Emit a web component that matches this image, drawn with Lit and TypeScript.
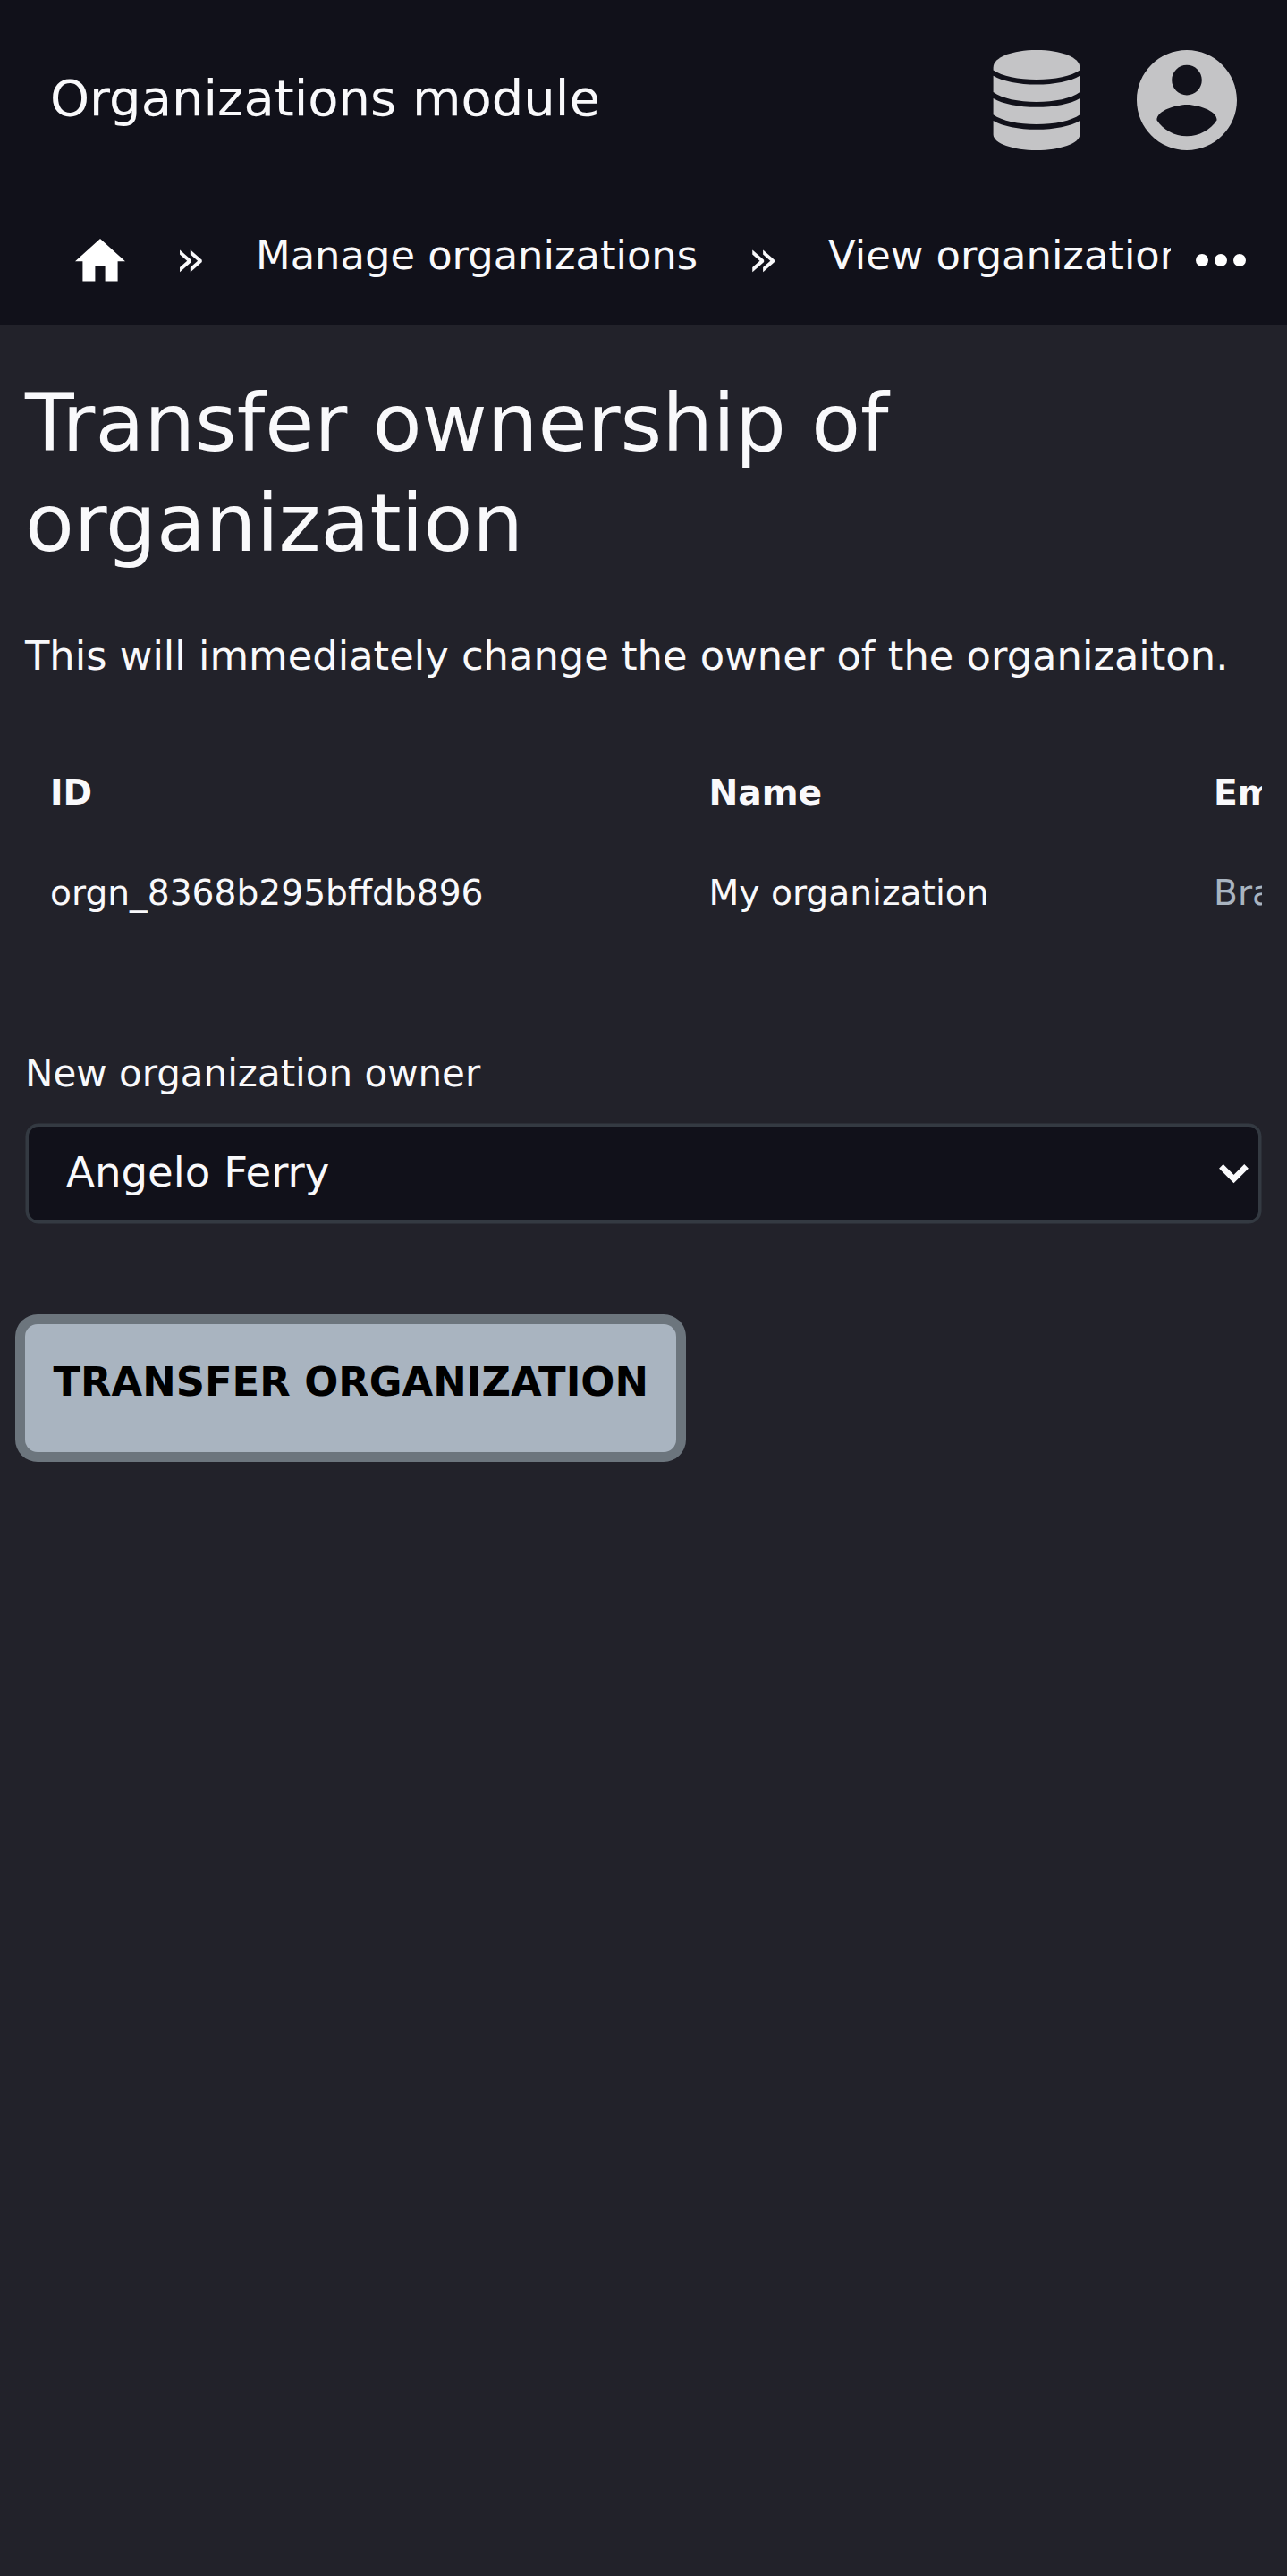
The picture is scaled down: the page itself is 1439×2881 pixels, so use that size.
import { LitElement, html, css } from "lit";
import { customElement } from "lit/decorators.js";

@customElement("app-root")
export class AppRoot extends LitElement {
  static styles = css`
    :host {
      display: block;
      box-sizing: border-box;
      min-height: 2881px;
      background: #22222a;
      color: #f9f9fb;
      font-family: "DejaVu Sans", sans-serif;
      overflow: hidden;
    }
    * {
      box-sizing: border-box;
    }
    svg {
      display: block;
      flex: none;
    }
    .header {
      display: flex;
      align-items: center;
      height: 224px;
      padding: 0 56.5px 0 56px;
      background: #11111a;
      font-size: 56px;
    }
    .title {
      flex: 1;
      line-height: 112px;
      margin-top: -4px;
    }
    .icons {
      display: flex;
      gap: 63px;
      color: #c4c4c6;
    }
    .crumbs {
      display: flex;
      align-items: center;
      height: 140px;
      background: #11111a;
      padding-left: 84px;
    }
    .trail {
      display: flex;
      align-items: center;
      width: 1225px;
      height: 140px;
      overflow: hidden;
      white-space: nowrap;
      font-size: 44.8px;
    }
    .home {
      margin-top: -6px;
    }
    .sep {
      width: 146px;
      margin-top: -11px;
      line-height: 56px;
      text-align: center;
      flex: none;
      font-size: 56px;
    }
    .crumb {
      flex: none;
      margin-top: -17px;
      line-height: 56px;
    }
    .more {
      margin: -7px 0 0 28px;
    }
    .main {
      padding: 53px 28px 0;
    }
    .heading {
      margin: 0;
      font-size: 89.6px;
      line-height: 112px;
      font-weight: 400;
    }
    .note {
      margin: 59px 0 0;
      font-size: 44.8px;
      line-height: 67px;
    }
    .table {
      margin-top: 64px;
      overflow: hidden;
      font-size: 39.2px;
    }
    .row {
      display: grid;
      grid-template-columns: 736.5px 564.5px 1fr;
      padding-left: 28px;
      height: 112px;
      line-height: 112px;
      white-space: nowrap;
    }
    .head {
      font-weight: 700;
    }
    .link {
      color: #a9b4c0;
    }
    .label {
      display: block;
      margin-top: 114px;
      font-size: 42px;
      line-height: 63px;
    }
    .select {
      display: flex;
      align-items: center;
      justify-content: space-between;
      height: 111px;
      margin: 25px 1px 0;
      padding: 0 11.5px 0 42px;
      border: 3px solid #343a42;
      border-radius: 14px;
      box-shadow: 0 0 0 0.5px #343a42;
      background: #11111a;
      font-size: 46.67px;
    }
    .value {
      margin-top: -3px;
    }
    .chevron {
      margin-top: 1px;
    }
    .button {
      display: inline-flex;
      align-items: center;
      height: 143.5px;
      margin: 112.5px 0 0;
      padding: 0 31.5px 14px;
      border: 0;
      border-radius: 14px;
      background: #a9b4c0;
      box-shadow: 0 0 0 11px #6c757d;
      color: #000;
      font: 700 44.8px "DejaVu Sans", sans-serif;
      white-space: nowrap;
    }
  `;

  render() {
    return html`
      <header class="header">
        <div class="title">Organizations module</div>
        <div class="icons">
          <svg width="98" height="112" viewBox="0 0 98 112" fill="currentColor">
            <path d="M.6 19.500C.6 8 22 0 49 0s48.400 8 48.400 19.500V22.500C88 29 69 33 49 33S10 29 .6 22.500z" />
            <path d="M.6 28.700C11 35 29 38.500 49 38.500S87 35 97.400 28.700V47C88 54 69 58 49 58S10 54 .6 47z" />
            <path d="M.6 53.900C11 60.200 29 63.700 49 63.700S87 60.200 97.400 53.900V72.200C88 79 69 83 49 83S10 79 .6 72.200z" />
            <path d="M.6 79C11 85.300 29 88.800 49 88.800S87 85.300 97.400 79V94.500C97.400 104.500 75 112 49 112S.6 104.500 .6 94.500z" />
          </svg>
          <svg width="112" height="112" viewBox="2 2 20 20" fill="currentColor">
            <path
              d="M12 2C6.480 2 2 6.480 2 12s4.480 10 10 10 10-4.480 10-10S17.520 2 12 2zm0 3c1.660 0 3 1.340 3 3s-1.340 3-3 3-3-1.340-3-3 1.340-3 3-3zm0 14.200c-2.500 0-4.710-1.280-6-3.220.030-1.990 4-3.080 6-3.080 1.990 0 5.970 1.090 6 3.080-1.290 1.940-3.500 3.220-6 3.220z"
            />
          </svg>
        </div>
      </header>
      <nav class="crumbs">
        <div class="trail">
          <svg class="home" width="56" height="47.600" viewBox="2 3 20 17" fill="#fff">
            <path d="M10 20v-6h4v6h5v-8h3L12 3 2 12h3v8z" />
          </svg>
          <span class="sep">»</span>
          <span class="crumb">Manage organizations</span>
          <span class="sep">»</span>
          <span class="crumb">View organization</span>
        </div>
        <svg class="more" width="56" height="14" viewBox="0 0 56 14" fill="#fff">
          <circle cx="7" cy="7" r="7" />
          <circle cx="28" cy="7" r="7" />
          <circle cx="49" cy="7" r="7" />
        </svg>
      </nav>
      <main class="main">
        <h1 class="heading">Transfer ownership of organization</h1>
        <p class="note">This will immediately change the owner of the organizaiton.</p>
        <div class="table">
          <div class="row head"><span>ID</span><span>Name</span><span>Em</span></div>
          <div class="row">
            <span>orgn_8368b295bffdb896</span><span>My organization</span><span class="link">Bra</span>
          </div>
        </div>
        <span class="label">New organization owner</span>
        <div class="select">
          <span class="value">Angelo Ferry</span>
          <svg class="chevron" width="33" height="22" viewBox="0 0 33 22" fill="none" stroke="currentColor" stroke-width="6.600">
            <path d="M2.400 2.400L16.500 16.500L30.600 2.400" />
          </svg>
        </div>
        <button class="button">TRANSFER ORGANIZATION</button>
      </main>
    `;
  }
}
